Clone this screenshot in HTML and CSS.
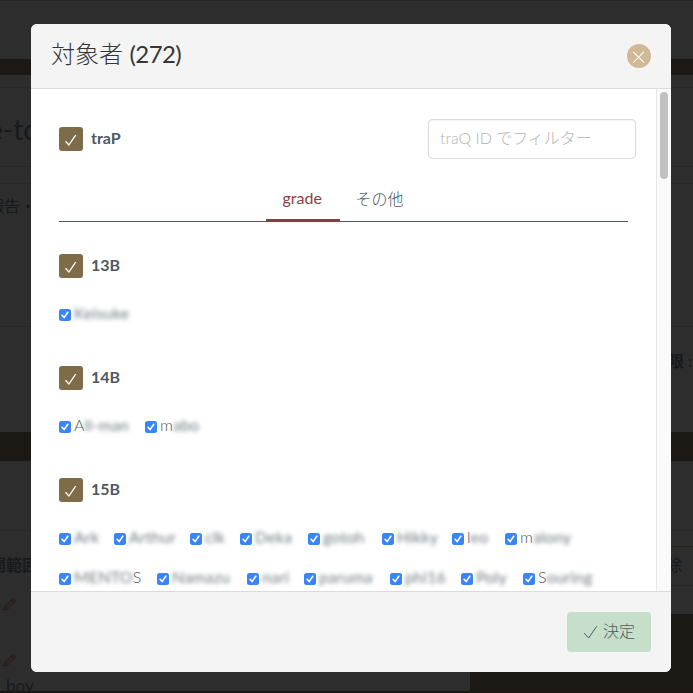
FILE: index.html
```
<!DOCTYPE html>
<html lang="ja">
<head>
<meta charset="utf-8">
<title>対象者</title>
<link rel="stylesheet" href="styles.css">
</head>
<body>
<svg class="defs" width="0" height="0">
  <symbol id="tick" viewBox="0 0 24 24"><path d="M6.5 14.2 9.9 18 16.7 8.2" fill="none" stroke="currentColor" stroke-width="1.3"/></symbol>
  <symbol id="check" viewBox="0 0 12 12"><rect width="12" height="12" rx="2.5" fill="#3985f8"/><path d="M3.1 6.3 5.1 8.6 8.8 3.2" fill="none" stroke="#fff" stroke-width="1.6" stroke-linecap="round" stroke-linejoin="round"/></symbol>
  <symbol id="pencil" viewBox="0 0 14 14"><path d="M1 13 2.2 8.9 10 1.2 12.8 4 5 11.8ZM2.2 8.9 5 11.8M8.4 2.8 11.2 5.6M3.8 9.8 10 3.8" fill="none" stroke="currentColor" stroke-width="1"/></symbol>
</svg>
<div class="page">
  <div class="band top"></div>
  <div class="band brown slim"></div>
  <div class="band line-a"></div>
  <div class="band title"><span>e-to</span></div>
  <div class="band line-b"></div>
  <div class="band report"><span>報告・</span></div>
  <div class="band limit"><b>限 :</b></div>
  <div class="band brown wide"></div>
  <div class="band line-c"></div>
  <div class="lower">
    <div class="left">
      <b class="range">開範囲</b>
      <svg class="pencil"><use href="#pencil"/></svg>
      <svg class="pencil second"><use href="#pencil"/></svg>
      <span class="boy">boy</span>
    </div>
    <div class="right"><div class="remove">除</div><div class="rest"></div></div>
  </div>
</div>
<section class="modal">
  <header class="head"><h1>対象者 <span>(272)</span></h1>
    <button class="close"><svg viewBox="0 0 24 24"><path d="M6.2 7.8 17 18.6M17 7.8 6.2 18.6" fill="none" stroke="#fff" stroke-width="1.1"/></svg></button>
  </header>
  <div class="body">
    <div class="content">
      <div class="filter">
        <div class="group"><svg class="box"><use href="#tick"/></svg><b>traP</b></div>
        <div class="input">traQ ID でフィルター</div>
      </div>
      <nav class="tabs"><a class="tab active">grade</a><a class="tab">その他</a></nav>
      <div class="group"><svg class="box"><use href="#tick"/></svg><b>13B</b></div>
      <div class="names">
        <label class="w70"><svg><use href="#check"/></svg><i>Keisuke</i></label>
      </div>
      <div class="group"><svg class="box"><use href="#tick"/></svg><b>14B</b></div>
      <div class="names">
        <label class="w70"><svg><use href="#check"/></svg><span>A</span><i>ll-man</i></label>
        <label class="w56"><svg><use href="#check"/></svg><span>m</span><i>abo</i></label>
      </div>
      <div class="group"><svg class="box"><use href="#tick"/></svg><b>15B</b></div>
      <div class="names">
        <label class="w39"><svg><use href="#check"/></svg><i>Ark</i></label>
        <label class="w60"><svg><use href="#check"/></svg><i>Arthur</i></label>
        <label class="w34"><svg><use href="#check"/></svg><i>clk</i></label>
        <label class="w52"><svg><use href="#check"/></svg><i>Deka</i></label>
        <label class="w58"><svg><use href="#check"/></svg><i>gotoh</i></label>
        <label class="w54"><svg><use href="#check"/></svg><i>Hikky</i></label>
        <label class="w37"><svg><use href="#check"/></svg><span>l</span><i>eo</i></label>
        <label class="w68"><svg><use href="#check"/></svg><span>m</span><i>alony</i></label>
      </div>
      <div class="names">
        <label class="w82"><svg><use href="#check"/></svg><i>MENTO</i><span>S</span></label>
        <label class="w74"><svg><use href="#check"/></svg><i>Namazu</i></label>
        <label class="w41"><svg><use href="#check"/></svg><i>nari</i></label>
        <label class="w70"><svg><use href="#check"/></svg><i>paruma</i></label>
        <label class="w55"><svg><use href="#check"/></svg><i>phi16</i></label>
        <label class="w46"><svg><use href="#check"/></svg><i>Poly</i></label>
        <label class="w71"><svg><use href="#check"/></svg><span>S</span><i>ouring</i></label>
      </div>
    </div>
    <div class="track"><div class="thumb"></div></div>
  </div>
  <footer class="foot"><button class="submit"><svg viewBox="0 0 16 16"><path d="M1.2 9.2 5.6 14 13.8 2.2" fill="none" stroke="currentColor" stroke-width="1"/></svg>決定</button></footer>
</section>
</body>
</html>
```
FILE: styles.css
```
* { box-sizing: border-box; }
body { margin: 0; width: 693px; height: 693px; overflow: hidden; background: #171717; color: #4d5a62; font: 16px/24px Lato, "Noto Sans CJK JP", sans-serif; }
.defs { position: absolute; }
.page { height: 691px; overflow: hidden; background: #2d2d2d; color: #171a1c; }
.band { border-bottom: 1px solid #282828; overflow: hidden; white-space: nowrap; }
.top { height: 59px; border-top: 1px solid #242424; border-bottom: 0; }
.brown { background: #1c1914; border: 0; }
.slim { height: 16px; }
.line-a { height: 13px; }
.title { height: 79px; padding-top: 23px; font-size: 28px; line-height: 36px; }
.title span { margin-left: -12px; }
.line-b { height: 17px; }
.report { height: 143px; padding-top: 10px; }
.report span { margin-left: -12px; }
.limit { height: 105px; padding: 22px 0 0 668px; border: 0; }
.wide { height: 29px; }
.line-c { height: 70px; }
.lower { display: flex; height: 160px; }
.left { width: 470px; padding: 22px 0 0 3px; }
.left > * { display: block; }
.range { margin-left: -13px; white-space: nowrap; }
.pencil { width: 14px; height: 14px; margin-top: 20px; color: #2a1516; }
.pencil.second { margin-top: 42px; }
.boy { margin: 7px 0 0 3px; font-size: 17px; }
.right { flex: 1; }
.remove { height: 40px; margin-top: 15px; padding: 6px 0 0 196px; border-top: 1px solid #282318; border-bottom: 1px solid #242424; }
.rest { height: 105px; border-top: 28px solid #2d2d2d; background: #1c1914; }

.modal { position: absolute; left: 31px; top: 24px; display: flex; flex-direction: column; width: 640px; height: 648px; overflow: hidden; border-radius: 6px; background: #fff; }
.head { display: flex; align-items: center; justify-content: space-between; height: 65px; padding: 0 20px; border-bottom: 1px solid #dbdbdb; background: #f4f4f4; }
h1 { margin: 0 0 4px; color: #363636; font: 300 24px/32px Lato, "Noto Sans CJK JP", sans-serif; }
h1 span { font-weight: 400; letter-spacing: -0.6px; }
.close { width: 24px; height: 24px; padding: 0; border: 0; border-radius: 50%; background: #d1b897; }
.close svg { display: block; width: 24px; height: 24px; }
.body { display: flex; height: 502px; }
.content { width: 625px; padding: 30px 20px 0 28px; overflow: hidden; }
.filter { display: flex; align-items: center; justify-content: space-between; height: 40px; margin-bottom: 22px; }
.group { display: flex; align-items: center; gap: 8px; height: 24px; }
.group b { margin-top: -2px; font: bold 16px/24px Lato, sans-serif; }
.box { width: 24px; height: 24px; border-radius: 3px; background: #7d6b4a; color: #fff; }
.input { width: 208px; height: 40px; padding: 6px 11px; border: 1px solid #dbdbdb; border-radius: 4px; box-shadow: inset 0 1px 2px #0a0a0a0d; color: #b4b4b4; font-weight: 300; white-space: nowrap; }
.tabs { display: flex; justify-content: center; height: 41px; margin: 0 8px 32px 0; border-bottom: 1px solid #4d5a62; }
.tab { height: 41px; padding: 6px 17px 6px 15px; font-weight: 300; white-space: nowrap; }
.tab.active { width: 74px; padding: 5px 16px; border-bottom: 3px solid #913c3c; color: #913c3c; font-weight: 400; }
.names { display: flex; gap: 16px; height: 40px; }
.group + .names { margin-top: 16px; }
.names + .group { margin-top: 32px; }
.names label { display: flex; align-items: center; height: 40px; white-space: nowrap; }
.names svg { flex: none; width: 12px; height: 12px; margin: 2px 3px 0 0; }
.names i, .names span { margin-top: -2px; }
.names span { font-weight: 300; }
.names i { font-style: normal; letter-spacing: 0.15px; opacity: .8; filter: blur(2px); }
.w34 { width: 34px; }
.w37 { width: 37px; }
.w39 { width: 39px; }
.w41 { width: 41px; }
.w46 { width: 46px; }
.w52 { width: 52px; }
.w54 { width: 54px; }
.w55 { width: 55px; }
.w56 { width: 56px; }
.w58 { width: 58px; }
.w60 { width: 60px; }
.w68 { width: 68px; }
.w70 { width: 70px; }
.w71 { width: 71px; }
.w74 { width: 74px; }
.w82 { width: 82px; }
.track { width: 15px; padding: 3px 0 0 3px; border-left: 1px solid #e8e8e8; background: #fafafa; }
.thumb { width: 8px; height: 87px; border-radius: 4px; background: #c1c1c1; }
.foot { display: flex; justify-content: flex-end; height: 81px; padding: 20px; border-top: 1px solid #dbdbdb; background: #f4f4f4; }
.submit { display: flex; align-items: center; width: 84px; height: 40px; padding: 0 0 4px 16px; border: 0; border-radius: 4px; background: #c6dfcb; color: #4d5a62; font: 300 16px/24px "Noto Sans CJK JP", sans-serif; white-space: nowrap; }
.submit svg { flex: none; width: 16px; height: 16px; margin: 4px 4px 0 0; }
```
